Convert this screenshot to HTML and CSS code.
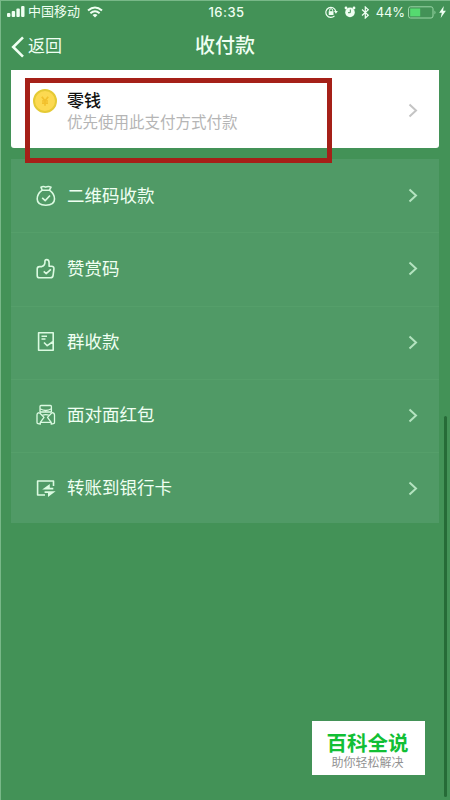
FILE: index.html
```html
<!DOCTYPE html>
<html lang="zh-CN">
<head>
<meta charset="utf-8">
<title>收付款</title>
<link rel="stylesheet" href="styles.css">
</head>
<body>
<div class="screen">
  <header class="status">
    <div class="status-left">
      <svg class="signal" width="18" height="12" viewBox="0 0 18 12"><rect x="0" y="8" width="3.4" height="4" rx="1"/><rect x="4.7" y="6" width="3.4" height="6" rx="1"/><rect x="9.4" y="3.5" width="3.4" height="8.5" rx="1"/><rect x="14.1" y="1" width="3.4" height="11" rx="1"/></svg>
      <span class="carrier">中国移动</span>
      <svg class="wifi" width="16" height="12" viewBox="0 0 16 12"><path d="M1 4.6Q8-1.5 15 4.6M3.4 7.2Q8 3.2 12.6 7.2" fill="none" stroke="#effff2" stroke-width="2"/><path d="M5.5 9Q8 7 10.5 9L8 11.6Z"/></svg>
    </div>
    <time class="clock">16:35</time>
    <div class="status-right">
      <svg width="13" height="12" viewBox="0 0 13 12"><path d="M9.5 9.8A5 5 0 1 1 10.7 5" fill="none" stroke="#effff2" stroke-width="1.2"/><path d="M9 5h3.8L10.9 7.8Z"/><rect x="3.7" y="5.2" width="4.8" height="3.8"/><path d="M4.6 5.4V4.2a1.5 1.5 0 0 1 3 0v1.2" fill="none" stroke="#effff2"/></svg>
      <svg class="alarm" width="12" height="12" viewBox="0 0 12 12"><circle cx="6" cy="6.4" r="4.8"/><circle cx="2" cy="2" r="1.4"/><circle cx="10" cy="2" r="1.4"/><path d="M6.3 3.5v3.2H4" fill="none" stroke="#439257" stroke-width="1"/></svg>
      <svg class="bluetooth" width="9" height="13" viewBox="0 0 9 13"><path d="M1 3.5L7.3 9.2 4.3 12V1L7.3 3.8 1 9.5" fill="none" stroke="#effff2" stroke-width="1.2"/></svg>
      <span class="percent">44%</span>
      <svg width="29" height="13" viewBox="0 0 29 13"><rect x=".5" y=".8" width="24.5" height="11.2" rx="2" fill="none" stroke="#9bd6a7"/><rect x="2.2" y="2.5" width="10" height="7.8" fill="#55da70"/><path d="M26.5 4.5q2 2 0 4z" fill="#9bd6a7"/></svg>
      <svg class="bolt" width="7" height="12" viewBox="0 0 7 12"><path d="M4.8 0L.2 6.8h2.6L1.7 12 6.9 4.8H4.1Z"/></svg>
    </div>
  </header>
  <nav class="nav">
    <a class="back"><svg width="14" height="22" viewBox="0 0 14 22"><path d="M12 1.3L2.2 11l9.8 9.7" fill="none" stroke="#effff2" stroke-width="2.6"/></svg><span>返回</span></a>
    <h1 class="title">收付款</h1>
  </nav>
  <main class="content">
    <section class="card">
      <svg class="coin" width="24" height="24" viewBox="0 0 24 24"><circle cx="12" cy="12" r="11" fill="#fcd951" stroke="#e5ca35" stroke-width="2"/><path d="M8.8 7.8l3.2 4 3.2-4M9 12h6M9 14.2h6M12 12v4.8" fill="none" stroke="#f2c02c" stroke-width="1.7"/></svg>
      <div class="card-text"><strong class="card-title">零钱</strong><span class="card-note">优先使用此支付方式付款</span></div>
      <svg class="arrow gray" width="10" height="15" viewBox="0 0 10 15"><path d="M1.5 1.5l6.5 6-6.5 6"/></svg>
      <div class="highlight"></div>
    </section>
    <ul class="list">
      <li class="row"><svg class="icon" width="20" height="22" viewBox="0 0 20 22"><path d="M6.2 5.2L5 2.2Q7.3.8 9.6 2.1 12.3.8 15 2.1L13.4 5.2M6.2 5.2h7.2M6.2 5.2C3 7.5 1.2 10.5 1.2 14c0 4 3 6.2 8.6 6.2s8.7-2.2 8.7-6.2c0-3.5-1.9-6.5-5.1-8.8M6.2 12.8l3 2.8 4.8-5.1"/></svg><span class="label">二维码收款</span><svg class="arrow" width="10" height="15" viewBox="0 0 10 15"><path d="M1.5 1.5l6.5 6-6.5 6"/></svg></li>
      <li class="row"><svg class="icon" width="20" height="22" viewBox="0 0 20 22"><path d="M1.2 11q0-2.4 2.4-2.4h2.2Q8.6 7.8 8.9 5V3.5q0-1.9 1.7-1.9 2.5 0 2.5 3.2v3.4h2.4q2.8 0 2.4 2.9l-.8 6.2q-.3 2.5-2.8 2.5H3.5q-2.3 0-2.3-2.4ZM7.7 13.4l2.5 2.2 4.7-4.3"/></svg><span class="label">赞赏码</span><svg class="arrow" width="10" height="15" viewBox="0 0 10 15"><path d="M1.5 1.5l6.5 6-6.5 6"/></svg></li>
      <li class="row"><svg class="icon" width="20" height="22" viewBox="0 0 20 22"><path d="M17.2 10V1.8H2.6v17.4h14.6v-4.5M5.5 5.2h5.5M5.5 8h4M8 11.5l3.2 3.2 6-4.2v5"/></svg><span class="label">群收款</span><svg class="arrow" width="10" height="15" viewBox="0 0 10 15"><path d="M1.5 1.5l6.5 6-6.5 6"/></svg></li>
      <li class="row"><svg class="icon thin" width="20" height="22" viewBox="0 0 20 22"><path d="M4 8V2.5q0-1 1-1h9.4q1 0 1 1V8M4 4.8q5.7 3.4 11.4 0M4 8H15.4M3.5 8.7Q1 8.7 1 11v7.5q0 1 1 1.2l2.3.5V18.4M15.9 8.7q2.6 0 2.6 2.3v7.5q0 1-1 1.2l-2.3.5V18.4M3.5 8.7L8 13.4 4.3 18.4H15.2L11.5 13.4l4.4-4.7M6.2 11.4q3.6-1.5 7.2 0"/></svg><span class="label">面对面红包</span><svg class="arrow" width="10" height="15" viewBox="0 0 10 15"><path d="M1.5 1.5l6.5 6-6.5 6"/></svg></li>
      <li class="row"><svg class="icon" width="20" height="22" viewBox="0 0 20 22"><path d="M9 18H1.6V4H17.5v5"/><path class="solid" d="M6.2 12.6L13.8 7v3.8h3.5v1.8ZM8.6 14.3h11L12 20v-3.9H8.6Z"/></svg><span class="label">转账到银行卡</span><svg class="arrow" width="10" height="15" viewBox="0 0 10 15"><path d="M1.5 1.5l6.5 6-6.5 6"/></svg></li>
    </ul>
  </main>
  <div class="scrollbar"></div>
  <aside class="watermark"><b>百科全说</b><span>助你轻松解决</span></aside>
</div>
</body>
</html>
```
FILE: styles.css
```css
* { box-sizing: border-box; }
body { margin: 0; font-family: "Liberation Sans", "Noto Sans CJK SC", sans-serif; }
svg { display: block; flex: none; }
.screen { position: relative; width: 450px; height: 800px; overflow: hidden; background: #439257; color: #effff2; box-shadow: inset 1px 1px #78b888; }
.status { display: grid; grid-template-columns: 1fr auto 1fr; align-items: center; height: 23px; padding: 1px 4px 0 7px; fill: #effff2; }
.status-left, .status-right { display: flex; align-items: center; }
.status-right { justify-content: flex-end; }
.signal { margin-top: -2px; }
.carrier { margin: 0 7px 0 3px; font-size: 13px; line-height: 20px; }
.clock { font: 500 13px/20px Inter, sans-serif; letter-spacing: .5px; }
.alarm { margin-left: 6px; }
.bluetooth { margin-left: 5px; }
.percent { margin: 0 3px 0 6px; font: 13px/20px Inter, sans-serif; letter-spacing: -.1px; }
.bolt { margin-left: 2px; }
.nav { display: grid; grid-template-columns: 1fr auto 1fr; align-items: center; height: 47px; padding: 0 11px; }
.back { display: flex; align-items: center; gap: 3px; font-size: 17px; line-height: 24px; }
.title { margin: -2px 0 0; font-size: 20px; font-weight: 500; line-height: 28px; }
.content { padding: 0 11px; }
.card { position: relative; display: flex; height: 78px; padding: 19px 21px 0 22px; background: #fff; border-radius: 0 0 3px 3px; }
.card-text { display: flex; flex: 1; flex-direction: column; margin: 1px 0 0 10px; }
.card-title { color: #111; font-size: 17px; font-weight: 500; line-height: 24px; }
.card-note { color: #b5b5b5; font-size: 15.5px; line-height: 18px; }
.arrow { fill: none; stroke: #b3e3bf; stroke-width: 2; }
.gray { margin-top: 14px; stroke: #c4c4c4; }
.highlight { position: absolute; left: 14px; top: 8px; width: 307px; height: 85px; border: 5px solid #a52018; }
.list { display: grid; grid-template-rows: repeat(4, 73.25px) 71px; height: 364px; margin: 11px 0 0; padding: 0; list-style: none; background: #509a66; }
.row { display: flex; align-items: center; padding: 0 21px 0 25px; }
.row + .row { padding-bottom: 1px; border-top: 1px solid #559f6a; }
.row:last-child { padding-bottom: 0; }
.icon { margin-right: 11px; fill: none; stroke: #dbfae1; stroke-width: 1.6; stroke-linejoin: round; }
.thin { stroke-width: 1.3; }
.icon .solid { fill: #dbfae1; stroke: none; }
.label { flex: 1; font-size: 17.5px; line-height: 26px; }
.scrollbar { position: absolute; left: 444px; top: 416px; width: 3px; height: 381px; border-radius: 2px; background: #266b37; }
.watermark { position: absolute; left: 312px; top: 721px; width: 113px; height: 54px; display: flex; flex-direction: column; align-items: center; padding: 10px 2px 0 0; background: #fff; }
.watermark b { color: #12bf35; font-size: 20.5px; line-height: 25px; }
.watermark span { color: #929292; font-size: 12px; line-height: 15px; }
```
